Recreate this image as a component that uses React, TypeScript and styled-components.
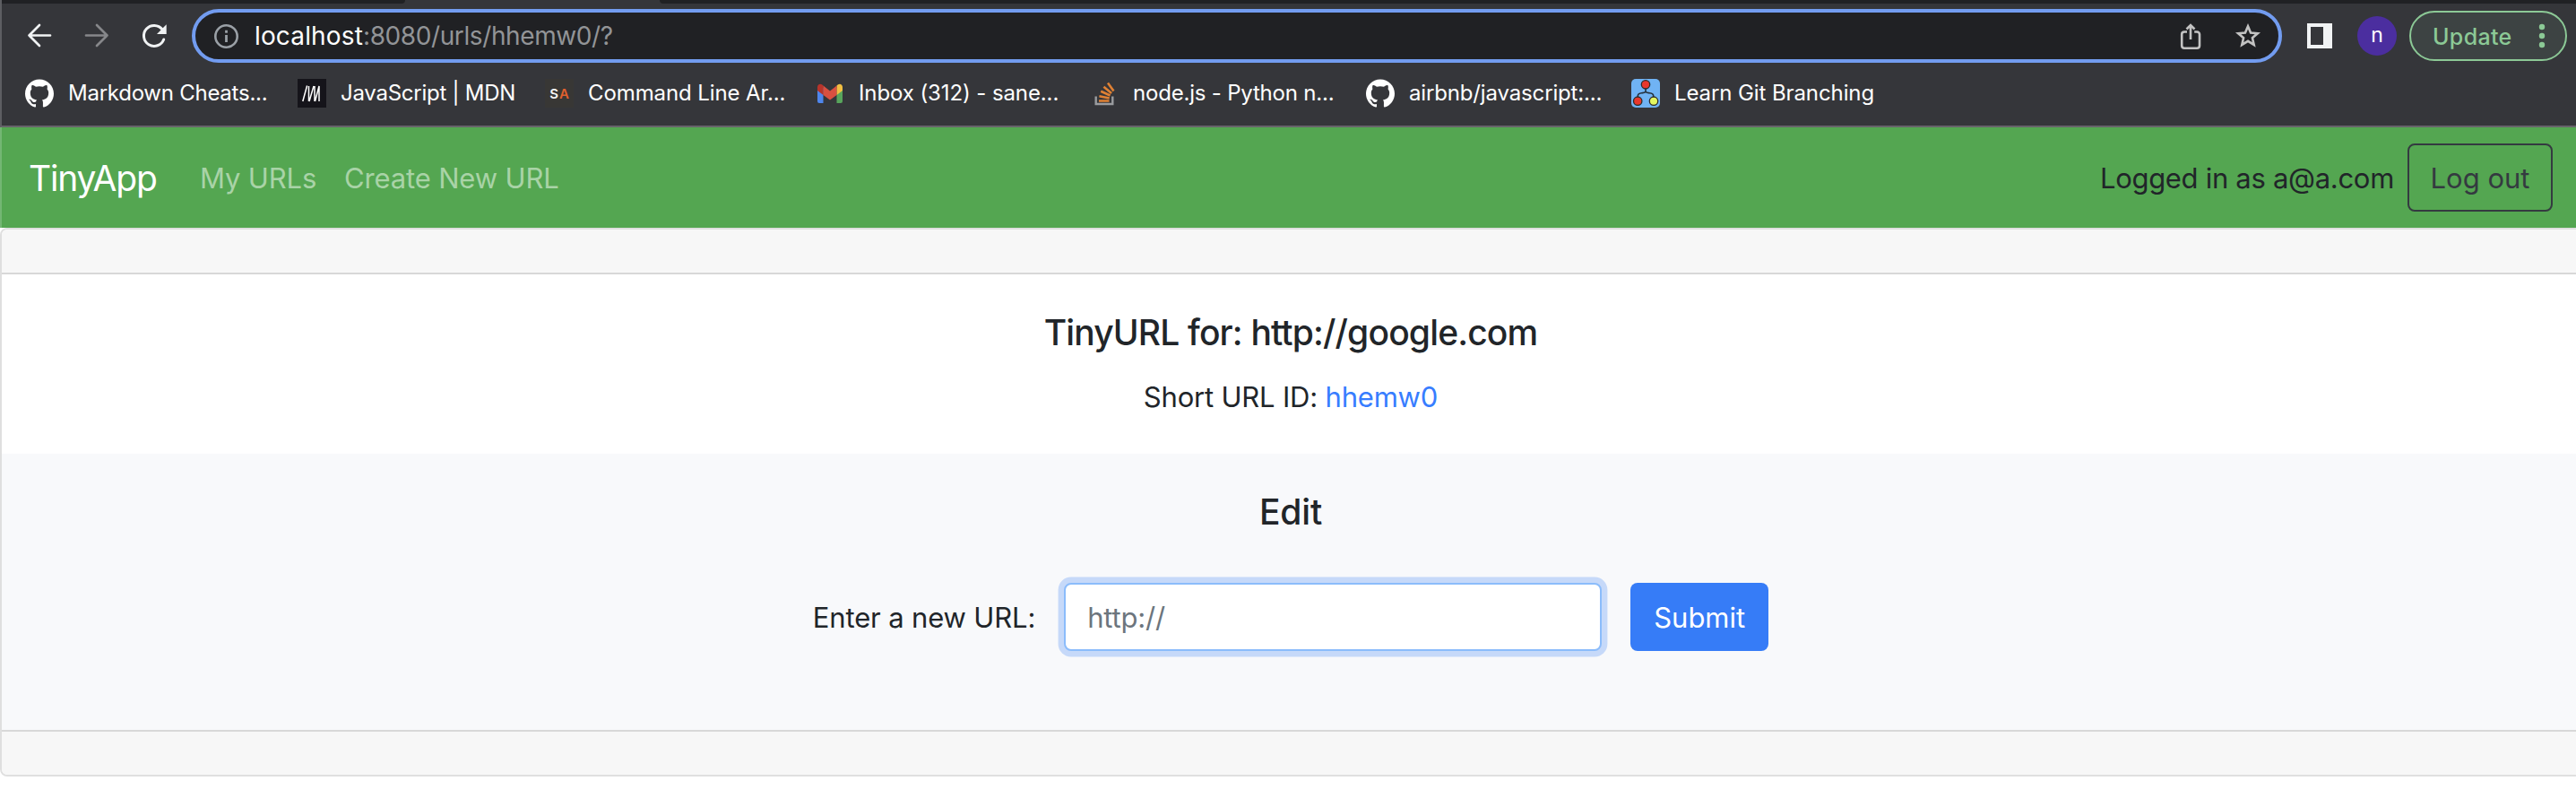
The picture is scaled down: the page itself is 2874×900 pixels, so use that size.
import React from "react";
import styled, { createGlobalStyle } from "styled-components";
import { SiGithub } from "react-icons/si";

const GlobalStyle = createGlobalStyle`
  * { box-sizing: border-box; }
  body {
    margin: 0;
    background: #fff;
    color: #212529;
    font-family: Inter, "Liberation Sans", sans-serif;
    font-size: 31px;
    overflow: hidden;
  }
`;

const Page = styled.div`
  height: 900px;
  overflow: hidden;
  background: #fff;
`;

const Chrome = styled.header`
  display: flex;
  flex-direction: column;
  height: 142px;
  background: #35363a;
  border-left: 2px solid #5d5e62;
  border-bottom: 2px solid #67636a;
`;

const TabStrip = styled.div`
  display: flex;
  height: 4px;
`;

const InactiveTabs = styled.div<{ $width?: number; $side: "left" | "right" }>`
  ${(p) => (p.$width ? `width: ${p.$width}px;` : "flex: 1;")}
  background: #202124;
  border-radius: ${(p) => (p.$side === "left" ? "0 0 10px 0" : "0 0 0 10px")};
`;

const ActiveTab = styled.div`
  width: 284px;
`;

const Toolbar = styled.div`
  display: flex;
  align-items: center;
  height: 72px;
  padding: 0 10px 0 24px;
`;

const NavIcon = styled.svg<{ $gap: number }>`
  width: 36px;
  height: 36px;
  margin-right: ${(p) => p.$gap}px;
  flex: none;
`;

const Omnibox = styled.div`
  display: flex;
  align-items: center;
  width: 2332px;
  height: 60px;
  padding: 0 18px 0 20px;
  border: 4px solid #729cf0;
  border-radius: 30px;
  background: #202124;
`;

const Address = styled.div`
  flex: 1;
  margin-left: 14px;
  font-size: 28px;
  line-height: 40px;
  letter-spacing: -0.4px;
  color: #929497;
  white-space: nowrap;
`;

const Host = styled.span`
  color: #fff;
  letter-spacing: 0.15px;
`;

const OmniIcon = styled.svg<{ $gap?: number }>`
  width: 32px;
  height: 32px;
  flex: none;
  margin-right: ${(p) => p.$gap ?? 0}px;
`;

const PanelIcon = styled.div`
  width: 28px;
  height: 28px;
  margin-left: 28px;
  border: solid #f1f3f4;
  border-width: 4px 10px 4px 4px;
`;

const Avatar = styled.div`
  display: grid;
  place-items: center;
  width: 44px;
  height: 44px;
  margin-left: 28px;
  border-radius: 50%;
  background: #4b2e9f;
  color: #fff;
  font-size: 23px;
  line-height: 40px;
  padding-bottom: 2px;
`;

const UpdateButton = styled.button`
  display: flex;
  align-items: center;
  justify-content: space-between;
  width: 176px;
  height: 56px;
  margin-left: 14px;
  padding: 0 22px 0 24px;
  border: 2px solid #8cc996;
  border-radius: 28px;
  background: #3d4343;
  color: #8cc996;
  font: 500 25px/40px Inter, sans-serif;
  letter-spacing: 0.35px;

  span { padding-top: 2px; }
`;

const Dots = styled.svg`
  width: 8px;
  height: 28px;
`;

const Bookmarks = styled.nav`
  display: flex;
  align-items: center;
  height: 56px;
  padding-left: 26px;
`;

const Bookmark = styled.a<{ $width: number; $tracking?: number }>`
  display: flex;
  align-items: center;
  gap: 16px;
  flex: none;
  width: ${(p) => p.$width}px;
  color: #fff;
  font-size: 24px;
  line-height: 32px;
  letter-spacing: ${(p) => p.$tracking ?? -0.1}px;
  white-space: nowrap;

  svg {
    width: 32px;
    height: 32px;
    flex: none;
  }
`;

const ArchiveIcon = styled.span`
  display: grid;
  place-items: center;
  grid-auto-flow: column;
  justify-content: center;
  width: 32px;
  height: 32px;
  flex: none;
  background: #383735;
  color: #f4f4f4;
  font: 600 15px Inter, sans-serif;
  gap: 1px;
`;

const Orange = styled.span`
  color: #e0602e;
`;

const AppBar = styled.nav`
  display: flex;
  align-items: center;
  height: 112px;
  padding: 1px 26px 0 30px;
  border-left: 2px solid #73b773;
  background: #54a651;
  line-height: 48px;
  white-space: nowrap;
`;

const Brand = styled.a`
  width: 191px;
  color: #fff;
  font-size: 39px;
  letter-spacing: -1.2px;
`;

const BarLink = styled.a`
  width: 161px;
  color: #a9d3a7;
  letter-spacing: -0.15px;
`;

const LoggedIn = styled.span`
  margin-left: auto;
  letter-spacing: -0.3px;
`;

const LogoutButton = styled.button`
  width: 162px;
  height: 76px;
  margin: -1px 0 0 15px;
  padding: 1px 0 0;
  border: 2px solid #343a40;
  border-radius: 8px;
  background: transparent;
  color: #343a40;
  font: 31px Inter, sans-serif;
`;

const Card = styled.main`
  width: 2880px;
  height: 612px;
  border: 2px solid #dfdfdf;
  border-radius: 8px;
  overflow: hidden;
`;

const CardEdge = styled.div<{ $position: "top" | "bottom" }>`
  height: 50px;
  background: #f7f7f7;
  border: 0 solid #d8d8d8;
  ${(p) => (p.$position === "top" ? "border-bottom-width: 2px;" : "border-top-width: 2px;")}
`;

const Section = styled.section<{ $height: number; $tinted?: boolean }>`
  display: flex;
  flex-direction: column;
  align-items: center;
  height: ${(p) => p.$height}px;
  padding-top: 41px;
  background: ${(p) => (p.$tinted ? "#f8f9fb" : "#fff")};
`;

const Title = styled.h5<{ $tracking?: number }>`
  margin: 0 0 24px;
  font-size: 39px;
  font-weight: 500;
  line-height: 48px;
  letter-spacing: ${(p) => p.$tracking ?? -0.2}px;
`;

const ShortUrl = styled.p`
  margin: 0;
  line-height: 48px;
  letter-spacing: -0.2px;
`;

const ShortLink = styled.a`
  color: #377dff;
`;

const Form = styled.form`
  display: flex;
  align-items: center;
  gap: 32px;
  margin-top: 31px;
`;

const Label = styled.label`
  letter-spacing: -0.15px;
  padding-top: 1px;
`;

const UrlInput = styled.input`
  width: 600px;
  height: 76px;
  padding: 0 24px;
  border: 2px solid #8bbcfb;
  border-radius: 8px;
  outline: none;
  background: #fff;
  box-shadow: 0 0 0 6.4px #c6d9f9;
  font: 31px Inter, sans-serif;
  letter-spacing: -0.2px;

  &::placeholder {
    color: #6c757d;
    opacity: 1;
  }
`;

const SubmitButton = styled.button`
  width: 154px;
  height: 76px;
  padding: 0;
  border: 0;
  border-radius: 8px;
  background: #367cf7;
  color: #fff;
  font: 31px Inter, sans-serif;
`;

const MdnIcon = () => (
  <svg viewBox="0 0 32 32">
    <rect width="32" height="32" fill="#15141a" />
    <path d="M5.800 25 10.600 7.500M12.500 25V8M13 25l5-17M19 25V8M19.500 25l4.500-17V25" fill="none" stroke="#fff" strokeWidth="1.500" />
  </svg>
);

const GmailIcon = () => (
  <svg viewBox="0 0 32 32">
    <path d="M2 10h6.500v17H4a2 2 0 0 1-2-2z" fill="#4f86ec" />
    <path d="M23.500 10H30v15a2 2 0 0 1-2 2h-4.500z" fill="#58a55c" />
    <path d="M23.500 7.500 25 6.300c2-1.600 5-.2 5 2.700v4l-6.500 5z" fill="#f1bf42" />
    <path d="M2 9c0-2.900 3-4.300 5-2.700l1.500 1.200V18L2 13z" fill="#b7342b" />
    <path d="m8.500 7.500 7.500 6 7.500-6V18L16 23.500 8.500 18z" fill="#d95040" />
  </svg>
);

const StackIcon = () => (
  <svg viewBox="0 0 32 32" fill="none">
    <path d="M6.700 19.500v8.500h18.600v-8.500" stroke="#9a9c9f" strokeWidth="2.400" />
    <g stroke="#df8134" strokeWidth="2.600">
      <path d="M10 24.500h11.500M10.400 19.200l11.300 2.300M12.200 13.700l10.400 4.800M15.400 8.700l8.700 7.300M20 4.500l6.500 9" />
    </g>
  </svg>
);

const GitBranchingIcon = () => (
  <svg viewBox="0 0 32 32">
    <rect width="32" height="32" rx="5" fill="#70b3f4" />
    <path d="M16 10v4.500M7.300 20v-1c0-2.500 1.500-3 4.200-3.300 2.500-.3 4-.2 4.500-1.700.5 1.500 2 1.400 4.500 1.700 2.700.3 4.200.8 4.200 3.300v1" fill="none" stroke="#24313d" strokeWidth="1.600" />
    <g stroke="#302c28" strokeWidth="1.300">
      <circle cx="16" cy="6.300" r="4.700" fill="#e8382c" />
      <circle cx="7.200" cy="24.700" r="4.700" fill="#e8382c" />
      <circle cx="25" cy="24.700" r="4.700" fill="#e4f760" />
    </g>
  </svg>
);

export default function App() {
  return (
    <Page>
      <GlobalStyle />
      <Chrome>
        <TabStrip>
          <InactiveTabs $side="left" $width={450} />
          <ActiveTab />
          <InactiveTabs $side="right" />
        </TabStrip>
        <Toolbar>
          <NavIcon $gap={28} viewBox="0 0 36 36" fill="none" stroke="#f1f3f4" strokeWidth="2.700" strokeLinecap="round" strokeLinejoin="round">
            <path d="M30 17.500H6.500M18 6 6.500 17.500 18 29" />
          </NavIcon>
          <NavIcon $gap={28} viewBox="0 0 36 36" fill="none" stroke="#86878a" strokeWidth="2.700" strokeLinecap="round" strokeLinejoin="round">
            <path d="M6 17.500h23.500M18 6l11.500 11.500L18 29" />
          </NavIcon>
          <NavIcon $gap={24} viewBox="0 0 36 36">
            <path d="M28.700 22A11.500 11.500 0 1 1 27 10.800" fill="none" stroke="#f1f3f4" strokeWidth="3" strokeLinecap="round" />
            <path d="M31.700 5.200v10.800H21z" fill="#f1f3f4" />
          </NavIcon>
          <Omnibox>
            <OmniIcon viewBox="0 0 32 32">
              <circle cx="14.500" cy="16.500" r="12.200" fill="none" stroke="#9aa0a6" strokeWidth="2.600" />
              <path d="M14.500 9.800v3M14.500 15v8" stroke="#9aa0a6" strokeWidth="2.800" />
            </OmniIcon>
            <Address>
              <Host>localhost</Host>:8080/urls/hhemw0/?
            </Address>
            <OmniIcon $gap={32} viewBox="0 0 32 32" fill="none" stroke="#c3c3c3" strokeWidth="2.600">
              <path d="M12 11.500H9a2.800 2.800 0 0 0-2.800 2.800V27A2.800 2.800 0 0 0 9 29.700h14.200A2.800 2.800 0 0 0 26 27V14.300a2.800 2.800 0 0 0-2.800-2.800h-3M16 20V4.500M11.500 8.500 16 4l4.500 4.500" />
            </OmniIcon>
            <OmniIcon viewBox="0 0 32 32" fill="none" stroke="#c3c3c3" strokeWidth="2.600">
              <path d="m16 5.300 3.050 7.200 7.800.68-5.920 5.120 1.780 7.620L16 21.870l-6.710 4.050 1.780-7.620-5.920-5.120 7.800-.68z" />
            </OmniIcon>
          </Omnibox>
          <PanelIcon />
          <Avatar>n</Avatar>
          <UpdateButton>
            <span>Update</span>
            <Dots viewBox="0 0 8 28" fill="#8cc996">
              <circle cx="4" cy="4" r="3.200" />
              <circle cx="4" cy="14" r="3.200" />
              <circle cx="4" cy="24" r="3.200" />
            </Dots>
          </UpdateButton>
        </Toolbar>
        <Bookmarks>
          <Bookmark $width={304} $tracking={-0.25}><SiGithub />Markdown Cheats...</Bookmark>
          <Bookmark $width={276} $tracking={-0.25}><MdnIcon />JavaScript | MDN</Bookmark>
          <Bookmark $width={302}><ArchiveIcon>S<Orange>A</Orange></ArchiveIcon>Command Line Ar...</Bookmark>
          <Bookmark $width={306}><GmailIcon />Inbox (312) - sane...</Bookmark>
          <Bookmark $width={308} $tracking={-0.2}><StackIcon />node.js - Python n...</Bookmark>
          <Bookmark $width={296} $tracking={-0.15}><SiGithub />airbnb/javascript:...</Bookmark>
          <Bookmark $width={280}><GitBranchingIcon />Learn Git Branching</Bookmark>
        </Bookmarks>
      </Chrome>
      <AppBar>
        <Brand>TinyApp</Brand>
        <BarLink>My URLs</BarLink>
        <BarLink>Create New URL</BarLink>
        <LoggedIn>Logged in as a@a.com</LoggedIn>
        <LogoutButton>Log out</LogoutButton>
      </AppBar>
      <Card>
        <CardEdge $position="top" />
        <Section $height={200}>
          <Title $tracking={-0.85}>TinyURL for: http://google.com</Title>
          <ShortUrl>Short URL ID: <ShortLink>hhemw0</ShortLink></ShortUrl>
        </Section>
        <Section $height={308} $tinted>
          <Title>Edit</Title>
          <Form>
            <Label>Enter a new URL:</Label>
            <UrlInput placeholder="http://" />
            <SubmitButton type="button">Submit</SubmitButton>
          </Form>
        </Section>
        <CardEdge $position="bottom" />
      </Card>
    </Page>
  );
}
